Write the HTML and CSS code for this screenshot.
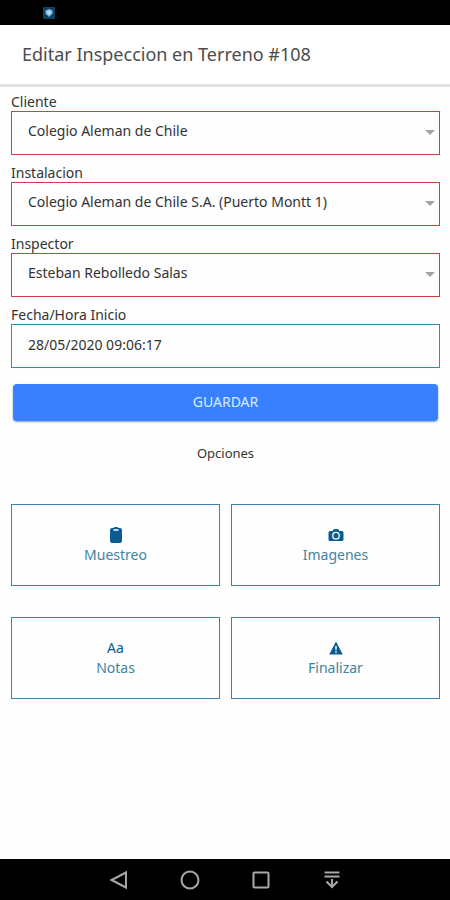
FILE: index.html
```html
<!DOCTYPE html>
<html lang="es">
<head>
<meta charset="utf-8">
<meta name="viewport" content="width=device-width, initial-scale=1">
<title>Editar Inspeccion en Terreno #108</title>
<link rel="stylesheet" href="styles.css">
</head>
<body>
<div class="status-bar">
  <svg class="status-icon" viewBox="0 0 12 12" aria-hidden="true">
    <rect width="12" height="12" rx="1" fill="#0f4265"/>
    <path d="M6 2 9.500 3.500v3L6 10 2.500 6.500v-3z" fill="#83b7d9"/>
    <circle cx="6" cy="5.500" r="2" fill="#b5d8ee"/>
  </svg>
</div>
<header class="toolbar">
  <h1 class="title">Editar Inspeccion en Terreno #108</h1>
</header>
<main class="content">
  <form class="form">
    <div class="field">
      <label class="label" for="cliente">Cliente</label>
      <div class="select-box">
        <select class="control required" id="cliente"><option>Colegio Aleman de Chile</option></select>
      </div>
    </div>
    <div class="field">
      <label class="label" for="instalacion">Instalacion</label>
      <div class="select-box">
        <select class="control required" id="instalacion"><option>Colegio Aleman de Chile S.A. (Puerto Montt 1)</option></select>
      </div>
    </div>
    <div class="field">
      <label class="label" for="inspector">Inspector</label>
      <div class="select-box">
        <select class="control required" id="inspector"><option>Esteban Rebolledo Salas</option></select>
      </div>
    </div>
    <div class="field">
      <label class="label" for="fecha">Fecha/Hora Inicio</label>
      <input class="control" id="fecha" type="text" value="28/05/2020 09:06:17">
    </div>
    <button class="save" type="button">GUARDAR</button>
  </form>
  <h2 class="options-title">Opciones</h2>
  <div class="options">
    <button class="tile" type="button">
      <svg class="tile-icon" viewBox="0 0 18 18" aria-hidden="true">
        <path fill="currentColor" fill-rule="evenodd" d="M5 2h1.500l1-1h3l1 1H13q2 0 2 2v11q0 2-2 2H5q-2 0-2-2V4q0-2 2-2zm1.500 1.200v1.600h5V3.200z"/>
      </svg>
      <span>Muestreo</span>
    </button>
    <button class="tile" type="button">
      <svg class="tile-icon" viewBox="0 0 18 18" aria-hidden="true">
        <path fill="currentColor" fill-rule="evenodd" d="M3 5h2.500l1.500-2h4l1.500 2H15q1.500 0 1.500 1.500v7Q16.500 15 15 15H3q-1.500 0-1.500-1.500v-7Q1.500 5 3 5zm6 .8a3.900 3.900 0 1 0 0 7.800 3.900 3.900 0 0 0 0-7.800zm0 1.300a2.600 2.600 0 1 1 0 5.200 2.600 2.600 0 0 1 0-5.200z"/>
        <circle cx="9" cy="9.700" r="1.300" fill="currentColor"/>
      </svg>
      <span>Imagenes</span>
    </button>
    <button class="tile" type="button">
      <span class="tile-glyph" aria-hidden="true">Aa</span>
      <span>Notas</span>
    </button>
    <button class="tile" type="button">
      <svg class="tile-icon" viewBox="0 0 18 18" aria-hidden="true">
        <path fill="currentColor" fill-rule="evenodd" d="M9 2.500 15.800 15.500H2.200zM8.200 7l.3 4.500h1L9.800 7zm.1 5.500v1.500h1.400v-1.500z"/>
      </svg>
      <span>Finalizar</span>
    </button>
  </div>
</main>
<nav class="nav-bar" aria-label="Sistema">
  <button class="nav-button" type="button" aria-label="Atras">
    <svg class="nav-icon" viewBox="0 0 20 20"><path d="M17 2.500v15L2.500 10z"/></svg>
  </button>
  <button class="nav-button" type="button" aria-label="Inicio">
    <svg class="nav-icon" viewBox="0 0 20 20"><circle cx="10" cy="10" r="8.500"/></svg>
  </button>
  <button class="nav-button" type="button" aria-label="Recientes">
    <svg class="nav-icon" viewBox="0 0 20 20"><rect x="2.500" y="2.500" width="15" height="15" rx="1"/></svg>
  </button>
  <button class="nav-button" type="button" aria-label="Ocultar barra">
    <svg class="nav-icon" viewBox="0 0 20 20"><path d="M2.500 2.500h15M2.500 6.500h15M10 9v8M4.500 11.500 10 17l5.500-5.500"/></svg>
  </button>
</nav>
</body>
</html>
```
FILE: styles.css
```css
* {
  box-sizing: border-box;
}

body {
  margin: 0;
  min-height: 100vh;
  display: flex;
  flex-direction: column;
  background: #fefefe;
  color: #333;
  font: 14px/17px "Noto Sans", "Open Sans", sans-serif;
}

button,
input,
select {
  font: inherit;
  color: inherit;
}

.status-bar {
  height: 25px;
  padding: 7px 43px;
  background: #000;
}

.status-icon {
  display: block;
  width: 12px;
  height: 12px;
}

.toolbar {
  padding: 17px 22px 18px;
  border-bottom: 3px solid #e2e2e2;
  background: #fff;
}

.title {
  margin: 0;
  color: #4c4c4c;
  font-size: 18px;
  font-weight: 400;
  line-height: 24px;
}

.content {
  flex: 1;
  padding: 6px 10px 16px 11px;
}

.form {
  display: flex;
  flex-direction: column;
  gap: 9px;
}

.label {
  display: block;
  padding-bottom: 1px;
}

.select-box {
  position: relative;
}

.select-box::after {
  content: "";
  position: absolute;
  top: 19px;
  right: 5px;
  border: 5px solid transparent;
  border-top-color: #a3a3a3;
  border-bottom: 0;
  pointer-events: none;
}

.control {
  display: block;
  width: 100%;
  height: 44px;
  padding: 0 16px 4px;
  border: 1px solid #3a8cab;
  border-radius: 0;
  outline: 0;
  background: #fefefe;
  line-height: 22px;
  appearance: none;
}

.control.required {
  border-color: #cf3f4a;
}

.save {
  height: 37px;
  margin: 7px 2px 0;
  padding: 0 0 2px;
  border: 0;
  border-radius: 4px;
  background: #3880ff;
  box-shadow: 0 1px 2px #8a9cc0;
  color: #d9ecff;
}

.options-title {
  margin: 24px 0 42px;
  font-size: 13px;
  font-weight: 400;
  text-align: center;
}

.options {
  display: grid;
  grid-template-columns: 1fr 1fr;
  gap: 31px 11px;
}

.tile {
  display: flex;
  flex-direction: column;
  align-items: center;
  justify-content: center;
  gap: 2px;
  height: 82px;
  padding: 0 0 2px;
  border: 1px solid #3c83ad;
  background: #fefefe;
  color: #4383a0;
}

.tile-icon {
  display: block;
  width: 18px;
  height: 18px;
  color: #0b5c93;
}

.tile-glyph {
  color: #0b5c93;
  line-height: 18px;
}

.nav-bar {
  display: flex;
  justify-content: center;
  gap: 31px;
  height: 41px;
  background: #000;
}

.nav-button {
  display: flex;
  align-items: center;
  justify-content: center;
  width: 40px;
  padding: 0;
  border: 0;
  background: none;
}

.nav-icon {
  width: 20px;
  height: 20px;
  fill: none;
  stroke: #a8a8a8;
  stroke-width: 2;
}
```
